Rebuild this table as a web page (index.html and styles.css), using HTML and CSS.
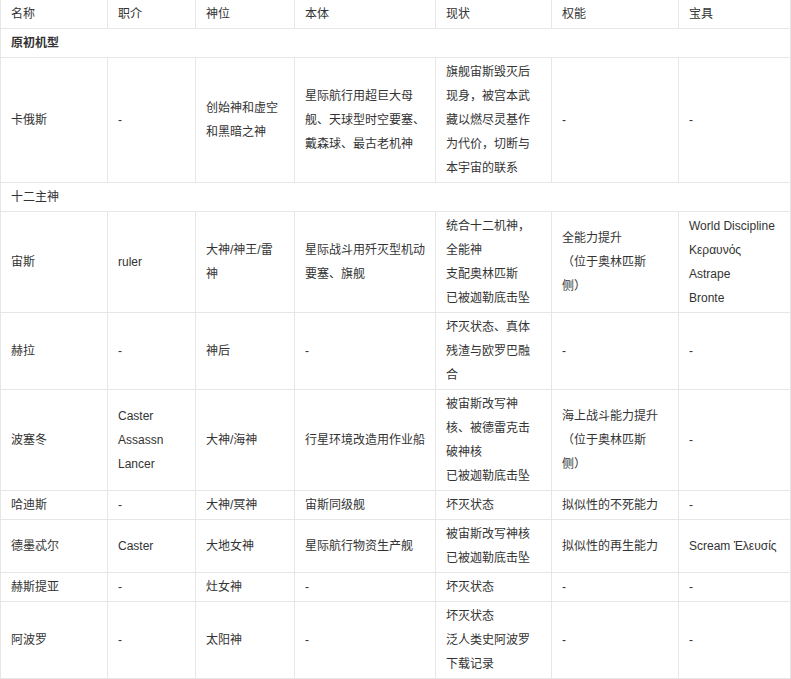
FILE: index.html
```html
<!DOCTYPE html>
<html lang="zh-CN">
<head>
<meta charset="utf-8">
<title>机神</title>
<link rel="stylesheet" href="styles.css">
</head>
<body>
<table class="gods">
  <colgroup>
    <col class="c1"><col class="c2"><col class="c3"><col class="c4"><col class="c5"><col class="c6"><col class="c7">
  </colgroup>
  <tbody>
    <tr><td>名称</td><td>职介</td><td>神位</td><td>本体</td><td>现状</td><td>权能</td><td>宝具</td></tr>
    <tr><td colspan="7" class="group strong">原初机型</td></tr>
    <tr>
      <td>卡俄斯</td><td>-</td><td>创始神和虚空和黑暗之神</td>
      <td>星际航行用超巨大母舰、天球型时空要塞、戴森球、最古老机神</td>
      <td>旗舰宙斯毁灭后现身，被宫本武藏以燃尽灵基作为代价，切断与本宇宙的联系</td>
      <td>-</td><td>-</td>
    </tr>
    <tr><td colspan="7" class="group">十二主神</td></tr>
    <tr>
      <td>宙斯</td><td>ruler</td><td>大神/神王/雷<br>神</td>
      <td>星际战斗用歼灭型机动要塞、旗舰</td>
      <td>统合十二机神，<br>全能神<br>支配奥林匹斯<br>已被迦勒底击坠</td>
      <td>全能力提升<br>（位于奥林匹斯<br>侧）</td>
      <td>World Discipline<br>Κεραυνός<br>Astrape<br>Bronte</td>
    </tr>
    <tr>
      <td>赫拉</td><td>-</td><td>神后</td><td>-</td>
      <td>坏灭状态、真体残渣与欧罗巴融合</td>
      <td>-</td><td>-</td>
    </tr>
    <tr>
      <td>波塞冬</td><td>Caster<br>Assassn<br>Lancer</td><td>大神/海神</td>
      <td>行星环境改造用作业船</td>
      <td>被宙斯改写神<br>核、被德雷克击<br>破神核<br>已被迦勒底击坠</td>
      <td>海上战斗能力提升<br>（位于奥林匹斯<br>侧）</td>
      <td>-</td>
    </tr>
    <tr>
      <td>哈迪斯</td><td>-</td><td>大神/冥神</td><td>宙斯同级舰</td>
      <td>坏灭状态</td><td>拟似性的不死能力</td><td>-</td>
    </tr>
    <tr>
      <td>德墨忒尔</td><td>Caster</td><td>大地女神</td><td>星际航行物资生产舰</td>
      <td>被宙斯改写神核<br>已被迦勒底击坠</td>
      <td>拟似性的再生能力</td><td>Scream Ἐλευσίς</td>
    </tr>
    <tr>
      <td>赫斯提亚</td><td>-</td><td>灶女神</td><td>-</td>
      <td>坏灭状态</td><td>-</td><td>-</td>
    </tr>
    <tr>
      <td>阿波罗</td><td>-</td><td>太阳神</td><td>-</td>
      <td>坏灭状态<br>泛人类史阿波罗<br>下载记录</td>
      <td>-</td><td>-</td>
    </tr>
  </tbody>
</table>
</body>
</html>
```
FILE: styles.css
```css
html, body {
  margin: 0;
  padding: 0;
  background: #ffffff;
}

body {
  font-family: "Liberation Sans", "Noto Sans CJK SC", sans-serif;
  font-size: 12px;
  line-height: 24px;
  color: #333333;
}

.gods {
  border-collapse: collapse;
  table-layout: fixed;
  width: 790px;
  margin-top: -1px;
}

.c1 { width: 107px; }
.c2 { width: 88px; }
.c3 { width: 99px; }
.c4 { width: 141px; }
.c5 { width: 116px; }
.c6 { width: 127px; }
.c7 { width: 112px; }

.gods td {
  border: 1px solid #e6e6e6;
  padding: 2px 10px;
  vertical-align: middle;
  text-align: left;
  word-wrap: break-word;
}

.gods td.strong {
  font-weight: bold;
}
```
